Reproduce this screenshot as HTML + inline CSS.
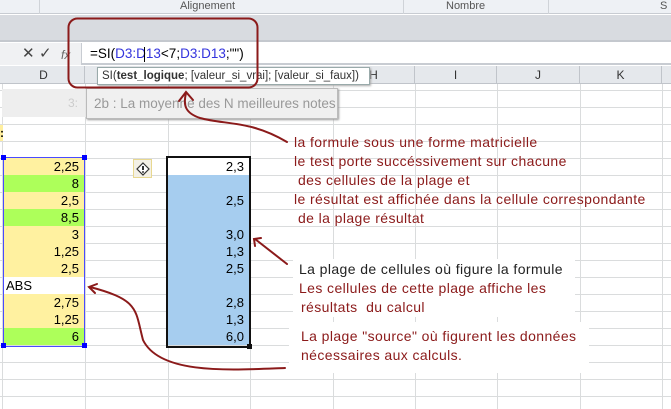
<!DOCTYPE html><html><head><style>
body{margin:0;width:671px;height:409px;overflow:hidden;background:#fff;font-family:"Liberation Sans",sans-serif;position:relative}
div{position:absolute;box-sizing:border-box}
.c{font-size:13px;text-align:right;padding-right:6px;line-height:17px;height:17px;color:#000}
.t{font-size:14px;color:#8b1a1a;white-space:nowrap;letter-spacing:0.4px;line-height:16px}
.h{font-size:12px;color:#333;text-align:center;top:66px;height:18px;line-height:18px}
</style></head><body>
<svg width="671" height="409" style="position:absolute;left:0;top:0">
<g stroke="#dadcdd" stroke-width="1">
<line x1="0" y1="90.5" x2="671" y2="90.5"/><line x1="0" y1="107.5" x2="671" y2="107.5"/><line x1="0" y1="124.5" x2="671" y2="124.5"/><line x1="0" y1="141.5" x2="671" y2="141.5"/><line x1="0" y1="158.5" x2="671" y2="158.5"/><line x1="0" y1="175.5" x2="671" y2="175.5"/><line x1="0" y1="192.5" x2="671" y2="192.5"/><line x1="0" y1="209.5" x2="671" y2="209.5"/><line x1="0" y1="226.5" x2="671" y2="226.5"/><line x1="0" y1="243.5" x2="671" y2="243.5"/><line x1="0" y1="260.5" x2="671" y2="260.5"/><line x1="0" y1="277.5" x2="671" y2="277.5"/><line x1="0" y1="294.5" x2="671" y2="294.5"/><line x1="0" y1="311.5" x2="671" y2="311.5"/><line x1="0" y1="328.5" x2="671" y2="328.5"/><line x1="0" y1="345.5" x2="671" y2="345.5"/><line x1="0" y1="362.5" x2="671" y2="362.5"/><line x1="0" y1="379.5" x2="671" y2="379.5"/><line x1="0" y1="396.5" x2="671" y2="396.5"/>
<line x1="2.5" y1="84" x2="2.5" y2="409"/><line x1="85.5" y1="84" x2="85.5" y2="409"/><line x1="168.5" y1="84" x2="168.5" y2="409"/><line x1="250.5" y1="84" x2="250.5" y2="409"/><line x1="333.5" y1="84" x2="333.5" y2="409"/><line x1="415.5" y1="84" x2="415.5" y2="409"/><line x1="497.5" y1="84" x2="497.5" y2="409"/><line x1="580.5" y1="84" x2="580.5" y2="409"/><line x1="662.5" y1="84" x2="662.5" y2="409"/>
</g></svg>
<div style="left:0;top:0;width:671px;height:14px;background:#eef1f5;border-bottom:1px solid #c8ccd2"></div>
<div style="left:180px;top:0;font-size:11px;color:#555;line-height:13px">Alignement</div>
<div style="left:446px;top:0;font-size:11px;color:#555;line-height:13px">Nombre</div>
<div style="left:660px;top:0;font-size:11px;color:#555;line-height:13px">S</div>
<div style="left:39px;top:0;width:1px;height:14px;background:#cfd3d8"></div>
<div style="left:403px;top:0;width:1px;height:14px;background:#cfd3d8"></div>
<div style="left:548px;top:0;width:1px;height:14px;background:#cfd3d8"></div>
<div style="left:0;top:15px;width:671px;height:27px;background:#d8dbe0;border-bottom:2px solid #c4c8ce"></div>
<div style="left:0;top:43px;width:671px;height:22px;background:#fff;border-bottom:2px solid #c8ccd2"></div>
<div style="left:0;top:43px;width:82px;height:22px;background:#f0f1f3;border-right:1px solid #c8ccd2"></div>
<div style="left:22px;top:44px;font-size:15px;color:#444;line-height:20px">✕</div>
<div style="left:39px;top:44px;font-size:15px;color:#444;line-height:20px">✓</div>
<div style="left:61px;top:45px;font-size:12px;color:#666;font-style:italic;line-height:20px">fx</div>
<div style="left:90px;top:43px;font-size:13.5px;line-height:22px;color:#000">=SI(<span style="color:#3333dd">D3:D13</span>&lt;7;<span style="color:#3333dd">D3:D13</span>;"")</div>
<div style="left:144px;top:47px;width:1px;height:15px;background:#000"></div>
<div style="left:0;top:66px;width:671px;height:18px;background:#e5e8ec;border-bottom:1px solid #c0c4ca"></div>
<div class="h" style="left:3px;width:82px;border-right:1px solid #c0c4ca">D</div>
<div class="h" style="left:333px;width:82px;border-right:1px solid #c0c4ca">H</div>
<div class="h" style="left:415px;width:82px;border-right:1px solid #c0c4ca">I</div>
<div class="h" style="left:497px;width:83px;border-right:1px solid #c0c4ca">J</div>
<div class="h" style="left:580px;width:82px;border-right:1px solid #c0c4ca">K</div>
<div style="left:97px;top:67px;width:273px;height:18px;background:#fff;border:1px solid #9aa;font-size:11.5px;line-height:16px;padding-left:4px;color:#333;box-shadow:1px 1px 2px #aaa">SI(<b>test_logique</b>; [valeur_si_vrai]; [valeur_si_faux])</div>
<div style="left:2px;top:89px;width:86px;height:28px;background:#eeeeee"></div>
<div style="left:68px;top:96px;font-size:12px;color:#ccc">3:</div>
<div style="left:86px;top:88px;width:252px;height:31px;background:#f0f0f0;border:1px solid #bbb;box-shadow:1px 1px 2px #999;font-size:13.5px;color:#999;line-height:29px;padding-left:7px">2b : La moyenne des N meilleures notes</div>
<div style="left:0;top:125px;width:3px;height:16px;background:#ffef9f"></div>
<div style="left:0;top:126px;font-size:12px;font-weight:bold">:</div>
<div class="c" style="left:3px;top:158px;width:82px;background:#fff1a0">2,25</div>
<div class="c" style="left:3px;top:175px;width:82px;background:#adff5a">8</div>
<div class="c" style="left:3px;top:192px;width:82px;background:#fff1a0">2,5</div>
<div class="c" style="left:3px;top:209px;width:82px;background:#adff5a">8,5</div>
<div class="c" style="left:3px;top:226px;width:82px;background:#fff1a0">3</div>
<div class="c" style="left:3px;top:243px;width:82px;background:#fff1a0">1,25</div>
<div class="c" style="left:3px;top:260px;width:82px;background:#fff1a0">2,5</div>
<div class="c" style="left:3px;top:277px;width:82px;background:#fff;text-align:left;padding-left:3px">ABS</div>
<div class="c" style="left:3px;top:294px;width:82px;background:#fff1a0">2,75</div>
<div class="c" style="left:3px;top:311px;width:82px;background:#fff1a0">1,25</div>
<div class="c" style="left:3px;top:328px;width:82px;background:#adff5a">6</div>
<div style="left:3px;top:157px;width:82px;height:190px;border:1px solid #4a4aff"></div>
<div style="left:1px;top:155px;width:5px;height:5px;background:#00f"></div>
<div style="left:82px;top:155px;width:5px;height:5px;background:#00f"></div>
<div style="left:1px;top:343px;width:5px;height:5px;background:#00f"></div>
<div style="left:82px;top:343px;width:5px;height:5px;background:#00f"></div>
<div style="left:133px;top:159px;width:19px;height:19px;background:#f3f0e6;border:1px solid #e8d890"></div>
<svg width="14" height="14" style="position:absolute;left:136px;top:162px"><path d="M7 1L13 7L7 13L1 7Z" fill="#fff" stroke="#333" stroke-width="1.2"/><line x1="7" y1="4" x2="7" y2="8" stroke="#000" stroke-width="1.6"/><circle cx="7" cy="10" r="0.9"/></svg>
<div class="c" style="left:168px;top:158px;width:82px;background:#fff">2,3</div>
<div class="c" style="left:168px;top:175px;width:82px;height:170px;background:#a6cdef"></div>
<div class="c" style="left:168px;top:192px;width:82px">2,5</div>
<div class="c" style="left:168px;top:226px;width:82px">3,0</div>
<div class="c" style="left:168px;top:243px;width:82px">1,3</div>
<div class="c" style="left:168px;top:260px;width:82px">2,5</div>
<div class="c" style="left:168px;top:294px;width:82px">2,8</div>
<div class="c" style="left:168px;top:311px;width:82px">1,3</div>
<div class="c" style="left:168px;top:328px;width:82px">6,0</div>
<div style="left:166px;top:156px;width:85px;height:192px;border:2px solid #111"></div>
<div style="left:247px;top:344px;width:5px;height:5px;background:#111"></div>
<div class="t" style="left:294px;top:134px">la formule sous une forme matricielle</div>
<div class="t" style="left:294px;top:153px">le test porte succéssivement sur chacune</div>
<div class="t" style="left:298px;top:172px">des cellules de la plage et</div>
<div class="t" style="left:294px;top:191px">le résultat est affichée dans la cellule correspondante</div>
<div class="t" style="left:298px;top:210px">de la plage résultat</div>
<div style="left:293px;top:259px;width:282px;height:58px;background:#fff"></div>
<div class="t" style="left:299px;top:261px;color:#222">La plage de cellules où figure la formule</div>
<div class="t" style="left:299px;top:280px">Les cellules de cette plage affiche les</div>
<div class="t" style="left:301px;top:299px">résultats&nbsp; du calcul</div>
<div style="left:289px;top:322px;width:300px;height:51px;background:#fff"></div>
<div class="t" style="left:301px;top:328px">La plage "source" où figurent les données</div>
<div class="t" style="left:301px;top:347px">nécessaires aux calculs.</div>
<svg width="671" height="409" style="position:absolute;left:0;top:0">
<rect x="68.5" y="18.5" width="189" height="69" rx="9" fill="none" stroke="#8b1a1a" stroke-width="2"/>
<g fill="none" stroke="#8b1a1a" stroke-width="2" stroke-linecap="round">
<path d="M287 142C250 120 225 125 200 118C185 113 183 105 186 93"/>
<path d="M179 101L186 92L193 100"/>
<path d="M287 264L255 239"/>
<path d="M255 246L254 239L261 238"/>
<path d="M285 368C230 370 160 375 143 340C135 310 140 300 90 287"/>
<path d="M97 284L89 287L95 293"/>
</g></svg>
</body></html>
